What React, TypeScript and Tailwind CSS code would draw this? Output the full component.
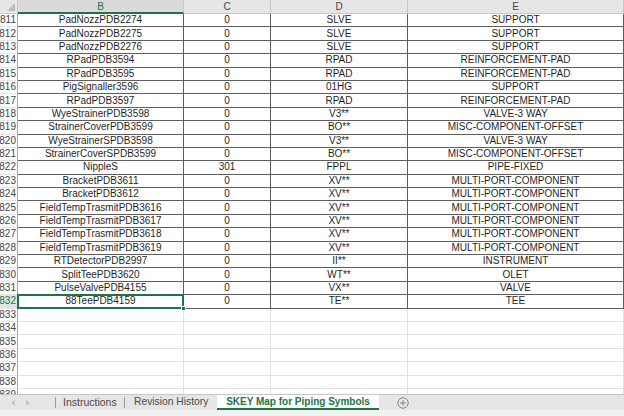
import { Fragment } from "react";

type Row = { n: number; b: string; c: string; d: string; e: string };

const rows: Row[] = [
  { n: 811, b: "PadNozzPDB2274", c: "0", d: "SLVE", e: "SUPPORT" },
  { n: 812, b: "PadNozzPDB2275", c: "0", d: "SLVE", e: "SUPPORT" },
  { n: 813, b: "PadNozzPDB2276", c: "0", d: "SLVE", e: "SUPPORT" },
  { n: 814, b: "RPadPDB3594", c: "0", d: "RPAD", e: "REINFORCEMENT-PAD" },
  { n: 815, b: "RPadPDB3595", c: "0", d: "RPAD", e: "REINFORCEMENT-PAD" },
  { n: 816, b: "PigSignaller3596", c: "0", d: "01HG", e: "SUPPORT" },
  { n: 817, b: "RPadPDB3597", c: "0", d: "RPAD", e: "REINFORCEMENT-PAD" },
  { n: 818, b: "WyeStrainerPDB3598", c: "0", d: "V3**", e: "VALVE-3 WAY" },
  { n: 819, b: "StrainerCoverPDB3599", c: "0", d: "BO**", e: "MISC-COMPONENT-OFFSET" },
  { n: 820, b: "WyeStrainerSPDB3598", c: "0", d: "V3**", e: "VALVE-3 WAY" },
  { n: 821, b: "StrainerCoverSPDB3599", c: "0", d: "BO**", e: "MISC-COMPONENT-OFFSET" },
  { n: 822, b: "NippleS", c: "301", d: "FPPL", e: "PIPE-FIXED" },
  { n: 823, b: "BracketPDB3611", c: "0", d: "XV**", e: "MULTI-PORT-COMPONENT" },
  { n: 824, b: "BracketPDB3612", c: "0", d: "XV**", e: "MULTI-PORT-COMPONENT" },
  { n: 825, b: "FieldTempTrasmitPDB3616", c: "0", d: "XV**", e: "MULTI-PORT-COMPONENT" },
  { n: 826, b: "FieldTempTrasmitPDB3617", c: "0", d: "XV**", e: "MULTI-PORT-COMPONENT" },
  { n: 827, b: "FieldTempTrasmitPDB3618", c: "0", d: "XV**", e: "MULTI-PORT-COMPONENT" },
  { n: 828, b: "FieldTempTrasmitPDB3619", c: "0", d: "XV**", e: "MULTI-PORT-COMPONENT" },
  { n: 829, b: "RTDetectorPDB2997", c: "0", d: "II**", e: "INSTRUMENT" },
  { n: 830, b: "SplitTeePDB3620", c: "0", d: "WT**", e: "OLET" },
  { n: 831, b: "PulseValvePDB4155", c: "0", d: "VX**", e: "VALVE" },
  { n: 832, b: "88TeePDB4159", c: "0", d: "TE**", e: "TEE" },
];

const emptyRows = [833, 834, 835, 836, 837, 838, 839];
const selectedRow = 832;

function RowHeader({ n }: { n: number }) {
  const active = n === selectedRow;
  return (
    <div
      className={`flex w-[18px] shrink-0 items-center justify-end overflow-hidden border-r border-b border-r-[#a6a6a6] border-b-[#e4e4e4] pr-px text-[10px] leading-none ${
        active ? "bg-[#e2e2e2] text-[#217346]" : "bg-white text-[#444]"
      }`}
    >
      {n}
    </div>
  );
}

function Cell({ w, children }: { w: string; children?: React.ReactNode }) {
  return (
    <div
      className={`flex ${w} shrink-0 items-center justify-center overflow-hidden whitespace-nowrap border-r border-b border-[#5e5e5e] text-[10px] leading-none text-[#1f1f1f]`}
    >
      {children}
    </div>
  );
}

export default function App() {
  return (
    <div className="flex h-[416px] w-[624px] flex-col overflow-hidden bg-white font-['Liberation_Sans',Arial,sans-serif]">
      <div className="h-[394px] shrink-0 overflow-hidden">
        {/* column headers */}
        <div className="flex h-[14px]">
          <div className="relative w-[18px] shrink-0 border-r border-b border-[#c8c8c8] bg-[#e6e6e6]">
            <div className="absolute right-[2px] bottom-[2px] h-0 w-0 border-b-[8px] border-l-[8px] border-b-[#bcbcbc] border-l-transparent" />
          </div>
          <div className="flex w-[166px] shrink-0 items-center justify-center border-r border-b-2 border-r-[#c8c8c8] border-b-[#217346] bg-[#dadada] pt-[2px] text-[10px] leading-none text-[#217346]">
            B
          </div>
          <div className="flex w-[87px] shrink-0 items-center justify-center border-r border-b border-[#c8c8c8] bg-[#e6e6e6] text-[10px] leading-none text-[#444]">
            C
          </div>
          <div className="flex w-[137px] shrink-0 items-center justify-center border-r border-b border-[#c8c8c8] bg-[#e6e6e6] text-[10px] leading-none text-[#444]">
            D
          </div>
          <div className="flex w-[216px] shrink-0 items-center justify-center border-r border-b border-[#c8c8c8] bg-[#e6e6e6] text-[10px] leading-none text-[#444]">
            E
          </div>
        </div>

        {rows.map((r) => (
          <div key={r.n} className="flex h-[13.4px]">
            <RowHeader n={r.n} />
            {r.n === selectedRow ? (
              <div className="relative flex w-[166px] shrink-0 items-center justify-center whitespace-nowrap border-r border-b border-[#5e5e5e] text-[10px] leading-none text-[#1f1f1f]">
                {r.b}
                <div className="absolute -top-px -left-px -right-px -bottom-px border-2 border-[#217346]" />
                <div className="absolute -right-[3px] -bottom-[3px] h-[5px] w-[5px] border border-white bg-[#217346]" />
              </div>
            ) : (
              <Cell w="w-[166px]">{r.b}</Cell>
            )}
            <Cell w="w-[87px]">{r.c}</Cell>
            <Cell w="w-[137px]">{r.d}</Cell>
            <Cell w="w-[216px]">{r.e}</Cell>
          </div>
        ))}

        {emptyRows.map((n) => (
          <div key={n} className="flex h-[13.4px]">
            <RowHeader n={n} />
            {["w-[166px]", "w-[87px]", "w-[137px]", "w-[216px]"].map((w) => (
              <Fragment key={w}>
                <div className={`${w} shrink-0 border-r border-b border-[#e2e2e2]`} />
              </Fragment>
            ))}
          </div>
        ))}
      </div>

      {/* sheet tabs */}
      <div className="flex h-[16px] shrink-0 items-stretch border-t border-[#c6c6c6] bg-[#e6e6e6]">
        <div className="flex w-[55px] items-center gap-[11px] pl-[11px]">
          <svg width="4" height="6" viewBox="0 0 4 6">
            <path d="M4 0 L0 3 L4 6 Z" fill="#c4c4c4" />
          </svg>
          <svg width="4" height="6" viewBox="0 0 4 6">
            <path d="M0 0 L4 3 L0 6 Z" fill="#c4c4c4" />
          </svg>
        </div>
        <div className="flex items-center">
          <span className="h-[11px] w-px bg-[#9a9a9a]" />
        </div>
        <div className="flex w-[69px] items-center justify-between pl-[7px]">
          <span className="whitespace-nowrap text-[10.5px] leading-none text-[#4a4a4a]">Instructions</span>
          <span className="h-[11px] w-px bg-[#9a9a9a]" />
        </div>
        <div className="flex w-[92px] items-center pl-[9px]">
          <span className="whitespace-nowrap text-[10.3px] leading-none text-[#4a4a4a]">Revision History</span>
        </div>
        <div className="flex w-[162px] items-center justify-center border-b-2 border-[#217346] bg-white text-[10px] font-bold leading-none whitespace-nowrap text-[#217346]">
          SKEY Map for Piping Symbols
        </div>
        <div className="flex items-center pl-[18px]">
          <svg width="12" height="12" viewBox="0 0 12 12">
            <circle cx="6" cy="6" r="5.2" fill="none" stroke="#808080" strokeWidth="1" />
            <path d="M6 3.2 V8.8 M3.2 6 H8.8" stroke="#808080" strokeWidth="1" />
          </svg>
        </div>
      </div>
      <div className="flex-1 bg-[#f1f1f1]" />
    </div>
  );
}
